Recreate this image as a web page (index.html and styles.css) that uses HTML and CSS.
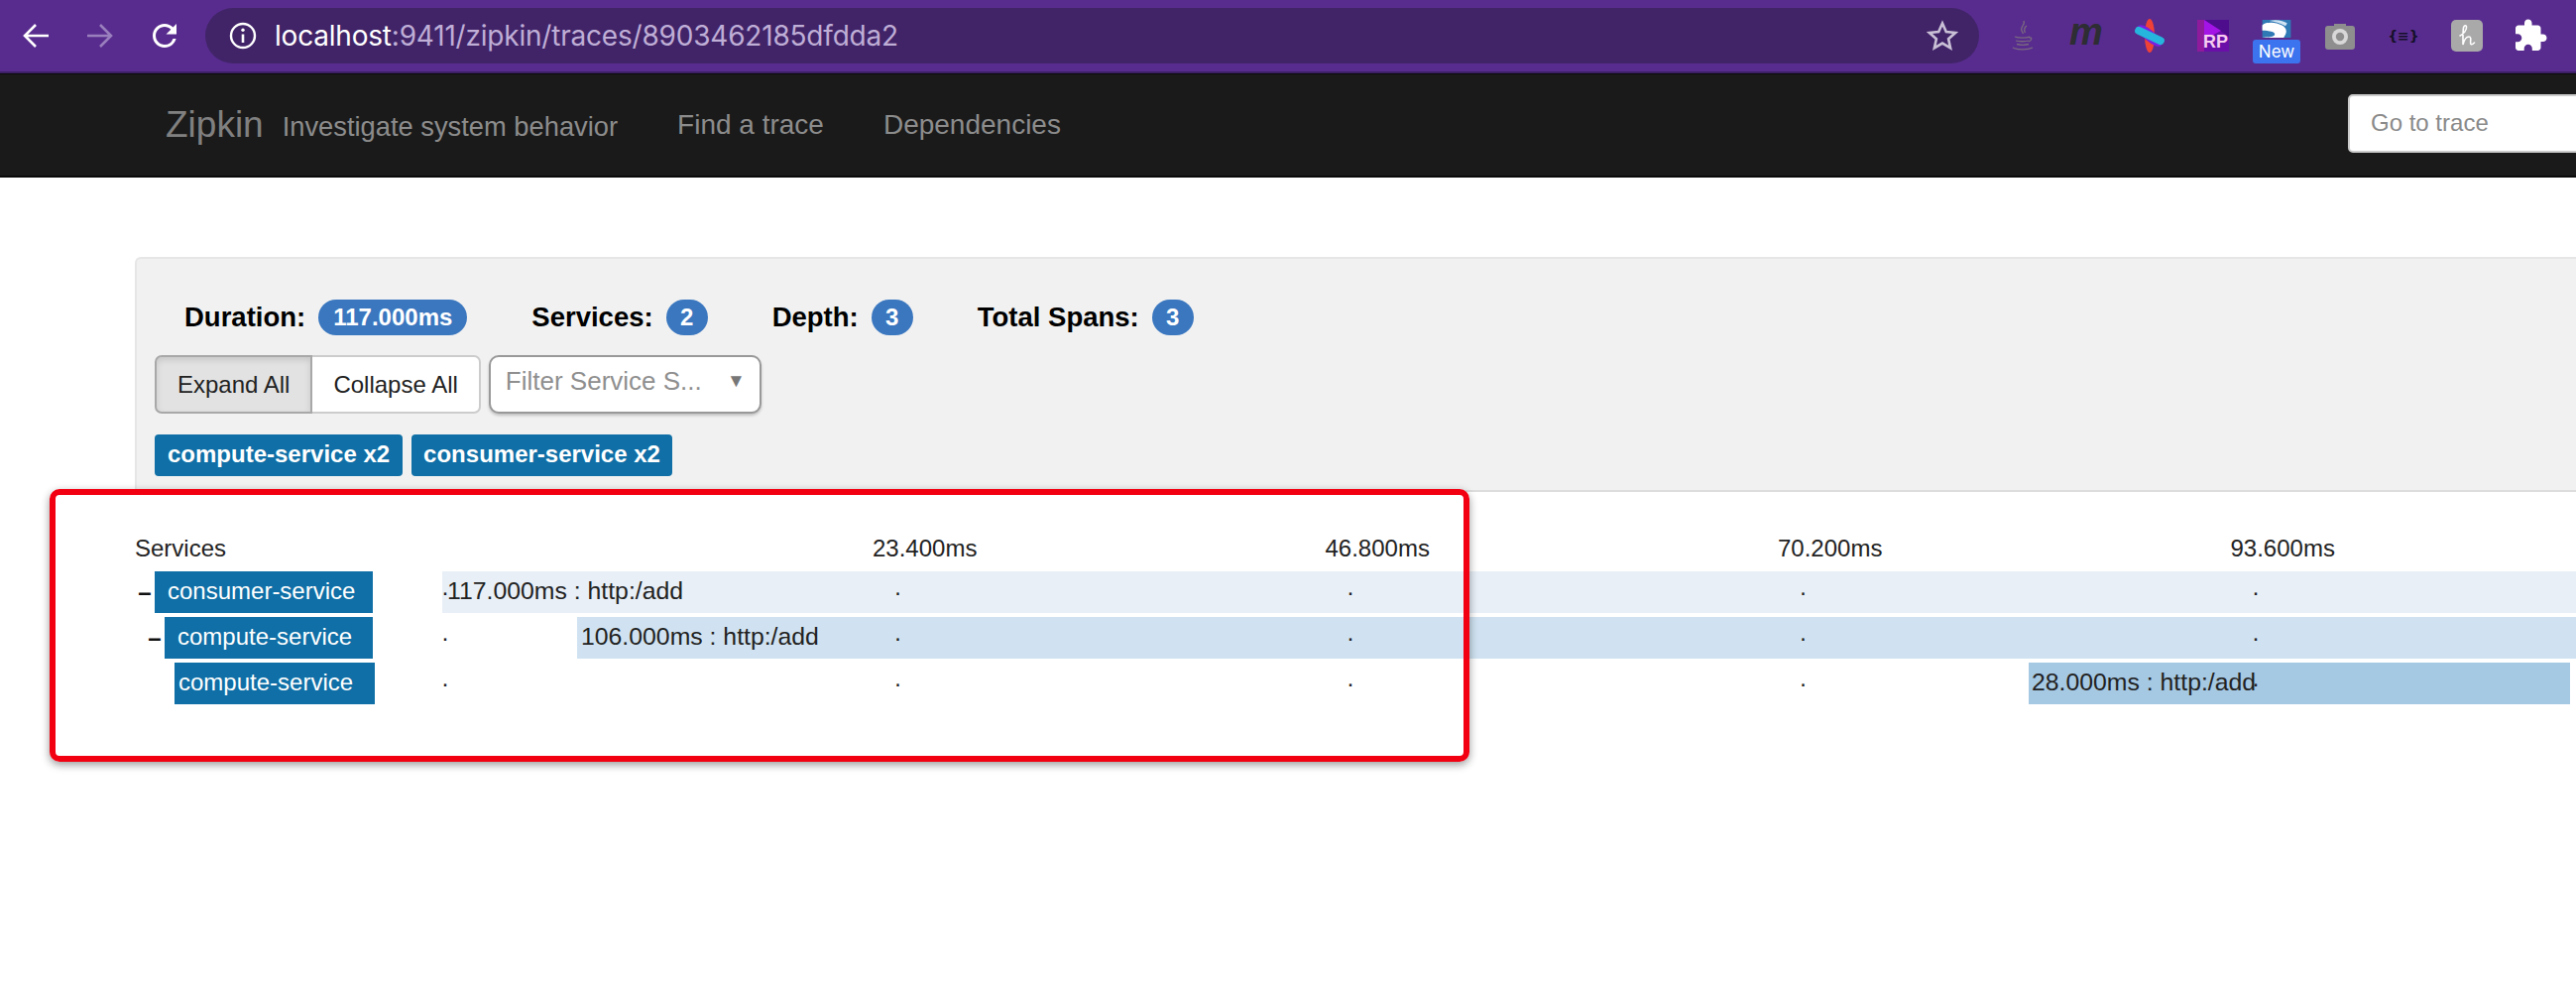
FILE: index.html
```html
<!DOCTYPE html>
<html lang="en">
<head>
  <meta charset="UTF-8">
  <title>Zipkin</title>
  <link rel="stylesheet" href="styles.css">
</head>
<body>
  <div class="toolbar">
    <div class="tool">
      <svg width="28" height="28" viewBox="0 0 28 28"><path d="M27 14H3M14 3L3 14l11 11" fill="none" stroke="#fff" stroke-width="2.6"/></svg>
    </div>
    <div class="tool">
      <svg width="28" height="28" viewBox="0 0 28 28"><path d="M1 14h24M14 3l11 11-11 11" fill="none" stroke="#9a7fbe" stroke-width="2.6"/></svg>
    </div>
    <div class="tool">
      <svg width="36" height="36" viewBox="0 0 24 24"><path fill="#fff" d="M17.65 6.35A7.958 7.958 0 0 0 12 4c-4.42 0-7.99 3.58-7.99 8s3.57 8 7.99 8c3.73 0 6.84-2.55 7.73-6h-2.08A5.99 5.99 0 0 1 12 18c-3.31 0-6-2.69-6-6s2.69-6 6-6c1.66 0 3.14.69 4.22 1.78L13 11h7V4l-2.35 2.35z"/></svg>
    </div>
    <div class="omnibox">
      <svg width="28" height="28" viewBox="0 0 28 28"><circle cx="14" cy="14" r="12" fill="none" stroke="#fff" stroke-width="2.4"/><path d="M14 12.5V21" stroke="#fff" stroke-width="2.6"/><circle cx="14" cy="8.2" r="1.7" fill="#fff"/></svg>
      <span class="url"><span class="url-host">localhost</span>:9411/zipkin/traces/8903462185dfdda2</span>
      <svg class="star" width="32" height="32" viewBox="0 0 32 32"><path d="M16 3.5l3.8 8.6 9.3.9-7 6.2 2 9.2-8.1-4.8-8.1 4.8 2-9.2-7-6.2 9.3-.9z" fill="none" stroke="#c9c0d6" stroke-width="2.6"/></svg>
    </div>
    <div class="extensions">
      <div class="ext">
        <svg width="24" height="32" viewBox="0 0 24 32" fill="none" stroke="#7a6a80" stroke-width="1.3"><path d="M13 1c2 4-4 6-2 10 .6 1.2 1.2 2 1.4 3M16 6c-3 2-3 4-1.6 7"/><path d="M4 17c4 1.5 12 1.5 15 0M5 21c3 1 10 1 13 0M6 24.5c3 .8 9 .8 12 0M2 28c5 2.5 15 2.5 20 0M18 18c3-1 4 2 0 4"/></svg>
      </div>
      <div class="ext"><span class="ext-m">m</span></div>
      <div class="ext">
        <svg width="34" height="34" viewBox="0 0 34 34"><ellipse cx="17" cy="17" rx="5" ry="17" fill="#ef4136"/><ellipse cx="17" cy="17" rx="5.5" ry="15" fill="#7a1fe0" transform="rotate(-48 17 17)"/><rect x="1" y="13" width="32" height="8" rx="4" fill="#26b5dc" transform="rotate(25 17 17)"/></svg>
      </div>
      <div class="ext">
        <div class="rp">
          <svg width="32" height="32" viewBox="0 0 32 32"><rect width="32" height="32" fill="#6a0fa8"/><rect width="7" height="32" fill="#8f1a9c"/><path d="M7 0l25 17V0z" fill="#4d0d8c"/><path d="M7 0l17 11L7 20z" fill="#a414e6"/></svg>
          <span class="rp-text">RP</span>
        </div>
      </div>
      <div class="ext ext-new">
        <svg width="32" height="18" viewBox="0 0 32 20"><rect width="32" height="20" fill="#2f79b5"/><path d="M0 6c6-5 16-3 22 0 4 2 7 6 3 12l-1 2H0c8-1 14-1 14-4S6 12 0 12z" fill="#fff"/><path d="M8 1c8-2 16 0 20 3l-2 3C20 3 14 2 8 1z" fill="#cfe3f2"/></svg>
        <span class="new-badge">New</span>
      </div>
      <div class="ext">
        <svg width="30" height="28" viewBox="0 0 30 28"><path d="M9 2h12v4H9z" fill="#8e8e8e"/><rect y="4" width="30" height="24" rx="3" fill="#8e8e8e"/><circle cx="15" cy="15" r="8" fill="#d8d8d8"/><circle cx="15" cy="15" r="4.2" fill="#8e8e8e"/></svg>
      </div>
      <div class="ext"><span class="ext-json">{≡}</span></div>
      <div class="ext">
        <svg width="32" height="32" viewBox="0 0 32 32"><rect width="32" height="32" rx="5" fill="#a9a9a9"/><path d="M9 16c4-2 7-6 6.5-9-.4-2-2.5-1.5-3 1-.7 4-.5 12-.5 17 1-4 3-8 6-8 3.500 0 .5 6 2 7.500 1 1 2.500-.5 3.500-1.500" fill="none" stroke="#fff" stroke-width="1.6" stroke-linecap="round"/></svg>
      </div>
      <div class="ext">
        <svg width="36" height="36" viewBox="0 0 24 24"><path fill="#fff" d="M20.5 11H19V7c0-1.1-.9-2-2-2h-4V3.5C13 2.12 11.88 1 10.5 1S8 2.12 8 3.5V5H4c-1.1 0-1.99.9-1.99 2v3.8H3.5c1.49 0 2.7 1.21 2.7 2.7s-1.21 2.7-2.7 2.7H2V20c0 1.1.9 2 2 2h3.8v-1.5c0-1.49 1.21-2.7 2.7-2.7 1.49 0 2.7 1.21 2.7 2.7V22H17c1.1 0 2-.9 2-2v-4h1.5c1.38 0 2.5-1.12 2.5-2.5S21.88 11 20.5 11z"/></svg>
      </div>
    </div>
  </div>

  <nav class="navbar">
    <span class="brand">Zipkin</span>
    <span class="tagline">Investigate system behavior</span>
    <a class="nav-link">Find a trace</a>
    <a class="nav-link">Dependencies</a>
    <input class="nav-search" placeholder="Go to trace">
  </nav>

  <main class="content">
    <section class="panel">
      <div class="summary">
        <span class="summary-item"><b>Duration:</b><span class="badge badge-wide">117.000ms</span></span>
        <span class="summary-item"><b>Services:</b><span class="badge">2</span></span>
        <span class="summary-item"><b>Depth:</b><span class="badge">3</span></span>
        <span class="summary-item"><b>Total Spans:</b><span class="badge">3</span></span>
      </div>
      <div class="controls">
        <div class="btn-group">
          <button class="btn active">Expand All</button>
          <button class="btn">Collapse All</button>
        </div>
        <div class="select">
          <span>Filter Service S...</span>
          <span class="caret">▼</span>
        </div>
      </div>
      <div class="tags">
        <span class="tag">compute-service x2</span>
        <span class="tag">consumer-service x2</span>
      </div>
    </section>

    <section class="timeline">
      <div class="timeline-head">
        <div class="services-title">Services</div>
        <div class="time-labels">
          <span>23.400ms</span>
          <span>46.800ms</span>
          <span>70.200ms</span>
          <span>93.600ms</span>
        </div>
      </div>

      <div class="row">
        <div class="service">
          <span class="toggle">–</span>
          <span class="service-name name-root">consumer-service</span>
        </div>
        <div class="track">
          <div class="span-bar level-1" style="left: 0; width: 2283px">117.000ms : http:/add</div>
          <div class="ticks"><i>·</i><i>·</i><i>·</i><i>·</i><i>·</i></div>
        </div>
      </div>
      <div class="row">
        <div class="service indent-1">
          <span class="toggle">–</span>
          <span class="service-name name-child">compute-service</span>
        </div>
        <div class="track">
          <div class="span-bar level-2" style="left: 136px; width: 2068px">106.000ms : http:/add</div>
          <div class="ticks"><i>·</i><i>·</i><i>·</i><i>·</i><i>·</i></div>
        </div>
      </div>
      <div class="row">
        <div class="service indent-2">
          <span class="service-name name-leaf">compute-service</span>
        </div>
        <div class="track">
          <div class="span-bar level-3" style="left: 1600px; width: 546px">28.000ms : http:/add</div>
          <div class="ticks"><i>·</i><i>·</i><i>·</i><i>·</i><i>·</i></div>
        </div>
      </div>
    </section>
  </main>

  <div class="highlight"></div>
</body>
</html>
```

FILE: styles.css
```css
html, body {
  margin: 0;
  height: 100%;
  overflow: hidden;
}

body {
  position: relative;
  font-family: "Liberation Sans", Arial, sans-serif;
  font-size: 24px;
  color: #222;
  background: #fff;
}

/* browser bar */
.toolbar {
  display: flex;
  align-items: center;
  height: 72px;
  padding-left: 3px;
  background: #582c8e;
  border-bottom: 2px solid #3d2065;
}

.tool {
  display: flex;
  align-items: center;
  justify-content: center;
  width: 65px;
  flex: none;
}

.omnibox {
  display: flex;
  align-items: center;
  width: 1789px;
  height: 56px;
  margin-left: 9px;
  padding: 0 21px 0 24px;
  box-sizing: border-box;
  flex: none;
  border-radius: 28px;
  background: #412468;
}

.url {
  margin-left: 18px;
  font-family: "Inter", "Liberation Sans", sans-serif;
  font-size: 28px;
  letter-spacing: -0.2px;
  color: #bfaed6;
}

.url-host {
  color: #fff;
}

.star {
  margin-left: auto;
}

.extensions {
  display: flex;
  margin-left: 12px;
}

.ext {
  position: relative;
  display: flex;
  align-items: center;
  justify-content: center;
  width: 64px;
  height: 72px;
  flex: none;
}

.ext-m {
  font-size: 38px;
  font-weight: bold;
  font-style: italic;
  color: #2d2d33;
  margin-top: -8px;
}

.rp {
  position: relative;
  width: 32px;
  height: 32px;
}

.rp-text {
  position: absolute;
  right: 1px;
  bottom: 1px;
  font-size: 18px;
  font-weight: bold;
  line-height: 17px;
  color: #f7cdf0;
}

.ext-new svg {
  margin-top: -14px;
}

.new-badge {
  position: absolute;
  left: 8px;
  top: 40px;
  width: 48px;
  height: 24px;
  border-radius: 3px;
  background: #3b74ee;
  color: #fff;
  font-family: "Inter", "Liberation Sans", sans-serif;
  font-size: 17px;
  line-height: 24px;
  text-align: center;
}

.ext-json {
  font-family: "DejaVu Sans", sans-serif;
  font-size: 14px;
  font-weight: bold;
  color: #16102a;
}

/* zipkin navbar */
.navbar {
  display: flex;
  align-items: center;
  height: 102px;
  padding-left: 167px;
  background: #1a1a1a;
  border-top: 1px solid #0a0a0a;
  border-bottom: 2px solid #0a0a0a;
}

.brand {
  font-size: 37px;
  color: #808080;
}

.tagline {
  margin-left: 19px;
  margin-top: 4px;
  font-size: 27.3px;
  color: #8c8c8c;
}

.nav-link {
  margin-left: 60px;
  font-size: 28px;
  color: #8c8c8c;
}

.nav-search {
  width: 330px;
  height: 59px;
  margin-left: auto;
  margin-right: -100px;
  margin-top: -4px;
  padding: 0 21px;
  box-sizing: border-box;
  flex: none;
  border: 2px solid #ccc;
  border-radius: 5px;
  font-family: inherit;
  font-size: 24px;
}

.nav-search::placeholder {
  color: #8a8a8a;
}

/* trace summary */
.content {
  padding: 80px 0 0 136px;
}

.panel {
  width: 2480px;
  padding: 41px 0 14px 18px;
  background: #f1f1f1;
  border-top: 2px solid #e6e6e6;
  border-left: 2px solid #e6e6e6;
  border-bottom: 2px solid #ddd;
  border-top-left-radius: 6px;
  box-sizing: border-box;
}

.summary {
  display: flex;
  gap: 65px;
  padding-left: 30px;
}

.summary-item {
  display: flex;
  align-items: center;
  gap: 13px;
  color: #000;
  font-size: 27.5px;
}

.badge {
  min-width: 14px;
  height: 36px;
  padding: 0 14px;
  border-radius: 18px;
  background: #3a77bf;
  color: #fff;
  font-size: 24px;
  font-weight: bold;
  line-height: 36px;
  text-align: center;
}

.badge-wide {
  padding: 0 15px;
}

.controls {
  display: flex;
  gap: 8px;
  margin-top: 20px;
}

.btn-group {
  display: flex;
}

.btn {
  height: 59px;
  padding: 0 21px;
  border: 2px solid #ccc;
  background: #fff;
  color: #222;
  font-family: inherit;
  font-size: 24px;
}

.btn:first-child {
  border-radius: 7px 0 0 7px;
  border-right: none;
}

.btn:last-child {
  border-radius: 0 7px 7px 0;
  border-left: none;
}

.btn.active {
  background: #e2e2e2;
  border-color: #a8a8a8;
  border-right: 2px solid #a8a8a8;
  box-shadow: inset 0 3px 6px rgba(0, 0, 0, 0.12);
}

.select {
  display: flex;
  justify-content: space-between;
  width: 275px;
  height: 59px;
  padding: 9px 14px 0 15px;
  box-sizing: border-box;
  border: 2px solid #999;
  border-radius: 10px;
  background: #fff;
  box-shadow: 0 2px 3px rgba(0, 0, 0, 0.2);
  color: #8f8f8f;
  font-size: 26px;
}

.caret {
  font-size: 19px;
  line-height: 30px;
  color: #777;
}

.tags {
  display: flex;
  gap: 9px;
  margin-top: 21px;
}

.tag {
  height: 42px;
  padding: 0 12px;
  border-radius: 4px;
  background: #0f6fa6;
  color: #fff;
  font-weight: bold;
  line-height: 40px;
}

.tag:first-child {
  padding: 0 13px;
}

/* span timeline */
.timeline-head {
  display: flex;
  align-items: center;
  height: 34px;
  margin: 40px 0 6px;
}

.services-title {
  width: 310px;
  flex: none;
}

.time-labels {
  display: flex;
  padding-left: 434px;
}

.time-labels span {
  width: 456.5px;
  flex: none;
}

.row {
  display: flex;
  height: 42px;
  margin-bottom: 4px;
}

.service {
  display: flex;
  width: 310px;
  flex: none;
  box-sizing: border-box;
}

.indent-1 {
  padding-left: 10px;
}

.indent-2 {
  padding-left: 40px;
}

.toggle {
  width: 20px;
  font-size: 24px;
  font-weight: bold;
  line-height: 42px;
  text-align: center;
  color: #111;
}

.service-name {
  height: 42px;
  background: #0f6fa6;
  color: #fff;
  line-height: 40px;
  box-sizing: border-box;
}

.name-root {
  width: 220px;
  padding-left: 13px;
}

.name-child {
  width: 210px;
  padding-left: 13px;
}

.name-leaf {
  width: 202px;
  padding-left: 4px;
}

.track {
  position: relative;
  flex: none;
  width: 2300px;
}

.span-bar {
  position: absolute;
  top: 0;
  height: 42px;
  padding-left: 4px;
  box-sizing: border-box;
  font-size: 24.8px;
  line-height: 40px;
  color: #222;
}

.level-1 {
  background: #e8eff7;
  padding-left: 5px;
}

.level-2 {
  background: #d0e2f1;
}

.level-3 {
  background: #a5c8e3;
  padding-left: 3px;
}

.ticks {
  position: absolute;
  top: 0;
  left: -1px;
  display: flex;
}

.ticks i {
  width: 456.5px;
  flex: none;
  font-style: normal;
  line-height: 42px;
}

/* annotation drawn over the screenshot */
.highlight {
  position: absolute;
  left: 50px;
  top: 493px;
  width: 1432px;
  height: 275px;
  box-sizing: border-box;
  border: 6px solid #f20012;
  border-radius: 10px;
  box-shadow: 0 3px 8px rgba(0, 0, 0, 0.4);
}
```
